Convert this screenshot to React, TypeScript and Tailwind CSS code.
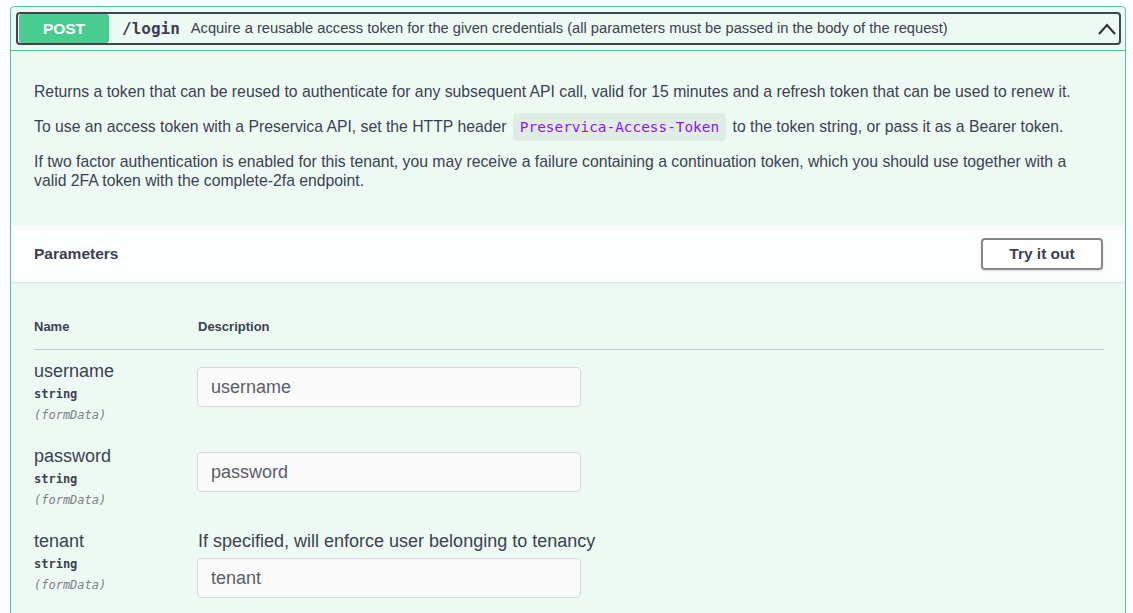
import React from "react";

const sans = "font-['Liberation_Sans',Arial,sans-serif]";
const mono = "font-['DejaVu_Sans_Mono',monospace]";

type Param = { name: string; description?: string };

const params: Param[] = [
  { name: "username" },
  { name: "password" },
  { name: "tenant", description: "If specified, will enforce user belonging to tenancy" },
];

function ParamRow({ p }: { p: Param }) {
  return (
    <div className="flex pt-[11px] pb-[12px]">
      <div className="w-[163px] shrink-0">
        <div className="text-[18px] leading-[20px] text-[#3b4151]">{p.name}</div>
        <div className={`${mono} mt-[5px] text-[12px] leading-[16px] font-bold text-[#3b4151]`}>string</div>
        <div className={`${mono} mt-[5px] text-[12px] leading-[16px] italic text-[#7d8088]`}>(formData)</div>
      </div>
      <div className="flex flex-col">
        {p.description && (
          <div className="ml-[1px] text-[18px] leading-[20px] text-[#3b4151]">{p.description}</div>
        )}
        <input
          placeholder={p.name}
          className={`${sans} ${p.description ? "mt-[7px]" : "mt-[6px]"} h-[40px] w-[384px] rounded-[4px] border border-[#d9d9d9] bg-[#fafafa] px-[13px] text-[18px] text-[#3b4151] placeholder:text-[#5a5e68] outline-none`}
        />
      </div>
    </div>
  );
}

export default function App() {
  return (
    <div className={`${sans} h-[613px] overflow-hidden bg-white pt-[6px] pl-[10px] text-[#3b4151]`}>
      <div className="w-[1116px] rounded-[4px] border border-[#49cc90] bg-[#edfaf4] pb-[40px]">
        {/* Summary */}
        <div className="border-b border-[#49cc90] p-[5px] pr-[4px]">
          <div className="flex h-[33px] items-center rounded-[4px] border-2 border-[#41444e] pl-[1px] pr-[2px]">
            <div className="flex h-[29px] w-[90px] items-center justify-center rounded-[3px] bg-[#49cc90] text-[15.5px] font-bold text-white">
              POST
            </div>
            <span className={`${mono} ml-[13px] text-[16px] font-bold text-[#3b4151]`}>/login</span>
            <span className="ml-[11px] text-[14.7px] text-[#3b4151]">
              Acquire a reusable access token for the given credentials (all parameters must be passed in the body of the request)
            </span>
            <svg className="ml-auto h-[20px] w-[20px]" viewBox="0 0 20 20" fill="none">
              <path d="M2 15 L10 6 L18 15" stroke="#2b2e36" strokeWidth="2" strokeLinejoin="miter" />
            </svg>
          </div>
        </div>

        {/* Description */}
        <div className="pl-[23px] pr-[21px] pt-[31px] pb-[36px] text-[15.75px] leading-[19px]">
          <p>
            Returns a token that can be reused to authenticate for any subsequent API call, valid for 15 minutes and a refresh token that can be used to renew it.
          </p>
          <p className="mt-[16px]">
            To use an access token with a Preservica API, set the HTTP header{" "}
            <code className={`${mono} mx-[2px] rounded-[4px] bg-[#0000000d] px-[7px] py-[6px] text-[14.4px] text-[#9012fe]`}>
              Preservica-Access-Token
            </code>{" "}
            to the token string, or pass it as a Bearer token.
          </p>
          <p className="mt-[15px] w-[1045px]">
            If two factor authentication is enabled for this tenant, you may receive a failure containing a continuation token, which you should use together with a valid 2FA token with the complete-2fa endpoint.
          </p>
        </div>

        {/* Parameters header */}
        <div className="flex h-[56px] items-center justify-between bg-[#fcfefd] pl-[23px] pr-[22px] shadow-[0_1px_2px_rgba(0,0,0,0.1)]">
          <h4 className="text-[15.5px] font-bold">Parameters</h4>
          <button className="h-[32px] w-[122px] rounded-[4px] border-2 border-[#888] bg-white text-[15.5px] font-bold text-[#3b4151] shadow-[0_1px_2px_rgba(0,0,0,0.15)]">
            Try it out
          </button>
        </div>

        {/* Table */}
        <div className="pl-[23px] pr-[21px] pt-[37px]">
          <div className="flex border-b border-[#c5cbcf] pb-[14px] text-[13px] leading-[16px] font-bold">
            <div className="w-[164px]">Name</div>
            <div>Description</div>
          </div>
          {params.map((p) => (
            <ParamRow key={p.name} p={p} />
          ))}
        </div>
      </div>
    </div>
  );
}
